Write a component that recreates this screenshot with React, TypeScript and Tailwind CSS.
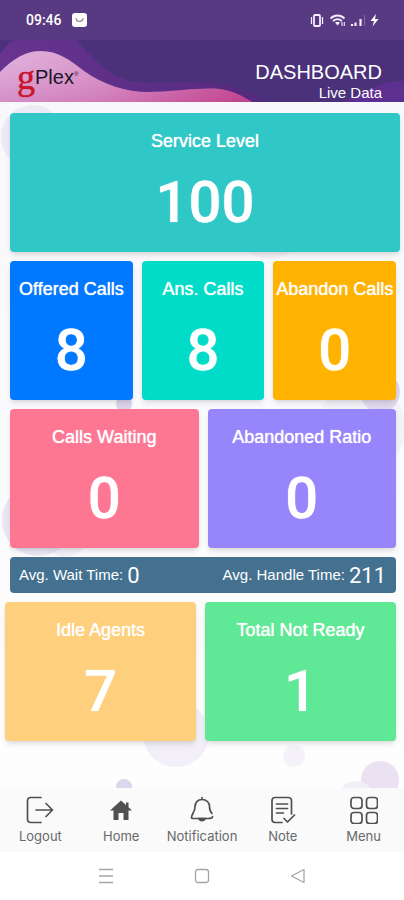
import type { ReactNode } from "react";

type Stat = { label: string; value: number; color: string };

const calls: Stat[] = [
  { label: "Offered Calls", value: 8, color: "bg-[#0078ff]" },
  { label: "Ans. Calls", value: 8, color: "bg-[#00dcc8]" },
  { label: "Abandon Calls", value: 0, color: "bg-[#ffb200]" },
];

const queue: Stat[] = [
  { label: "Calls Waiting", value: 0, color: "bg-[#fd7793]" },
  { label: "Abandoned Ratio", value: 0, color: "bg-[#9685fb]" },
];

const agents: Stat[] = [
  { label: "Idle Agents", value: 7, color: "bg-[#fecf7c]" },
  { label: "Total Not Ready", value: 1, color: "bg-[#5fe896]" },
];

function StatCard({ label, value, color }: Stat) {
  return (
    <section className={`${color} flex h-[139px] min-w-0 flex-1 flex-col items-center rounded-sm pt-4 text-white shadow-md`}>
      <h2 className="whitespace-nowrap text-[18px] leading-6 [text-shadow:0_0_1px_#fff]">{label}</h2>
      <p className="mt-4 font-[Roboto,sans-serif] text-[58px] font-medium leading-[66px] [text-shadow:0_0_1px_#fff]">{value}</p>
    </section>
  );
}

function StatusBar() {
  return (
    <div className="flex h-10 items-center justify-between bg-[#573a82] pl-[26px] pr-6 text-white">
      <div className="flex items-center gap-[10px]">
        <span className="font-[Roboto,sans-serif] text-[14px] font-medium">09:46</span>
        <svg className="h-[14px] w-[15px]" viewBox="0 0 15 14" fill="none">
          <rect width="15" height="14" rx="3" fill="#fff" />
          <path d="M4 5.5c.6 4 6.4 4 7 0" stroke="#888" strokeWidth="1.2" strokeLinecap="round" />
        </svg>
      </div>
      <svg className="h-4 w-[70px]" viewBox="0 0 70 16" fill="none" stroke="#f4ecff">
        <rect x="4" y="3" width="6" height="11" rx="1" strokeWidth="1.8" />
        <path d="M1.500 5v7M12.500 5v7" strokeWidth="1.300" />
        <path d="M20.500 6.500c4-4 10-4 14 0M23 9c3-2.500 6-2.500 9 0" strokeWidth="1.8" />
        <path d="M25 10.500 27.500 13.500l2.500-3c-1.500-1-3.500-1-5 0z" fill="#f4ecff" stroke="none" />
        <path d="M32 10v4M34.300 14v-4" strokeWidth="1.1" />
        <path d="M42 14v-2M45.500 14v-3.500M50.500 14V7" strokeWidth="2.200" />
        <path d="M54.500 14V3" strokeWidth="1.200" opacity=".25" />
        <path d="M66 2l-5.500 7H64l-1.500 5.500 6-7.500H65z" fill="#fff" stroke="none" />
      </svg>
    </div>
  );
}

function Header() {
  return (
    <header className="relative h-[62px] overflow-hidden bg-[#4a3179] text-white">
      <svg className="absolute inset-0 h-full w-full" viewBox="0 0 404 62" preserveAspectRatio="none" aria-hidden="true">
        <defs>
          <linearGradient id="pink" x1="0" x2="1" y1="0" y2="0">
            <stop offset="0" stopColor="#dba6d8" />
            <stop offset=".4" stopColor="#d68cc6" />
            <stop offset="1" stopColor="#c03d8b" />
          </linearGradient>
          <linearGradient id="shade" x1="0" x2="0" y1="0" y2="1">
            <stop offset="0" stopColor="#fff" stopOpacity=".12" />
            <stop offset="1" stopColor="#c0458f" stopOpacity=".25" />
          </linearGradient>
          <linearGradient id="violet" x1="0" x2="1" y1="0" y2="0">
            <stop offset="0" stopColor="#673490" />
            <stop offset="1" stopColor="#55297e" />
          </linearGradient>
        </defs>
        <path d="M0 14C6 6 10 0 18 0H76C88 12 104 36 134 42C168 45 205 38 226 46C246 50 258 56 268 62H0z" fill="url(#violet)" />
        <path d="M0 32C14 18 26 11 41 11C58 11 70 20 84 31C104 45 126 52 148 52C174 52 200 47 220 49C235 51 244 57 252 62H0z" fill="url(#pink)" />
        <path d="M0 32C14 18 26 11 41 11C58 11 70 20 84 31C104 45 126 52 148 52C174 52 200 47 220 49C235 51 244 57 252 62H0z" fill="url(#shade)" />
        <path d="M340 62C360 58 376 40 404 41V62z" fill="#6b2fa0" opacity=".6" />
      </svg>
      <div className="relative flex h-full items-end justify-between pl-[17px] pr-[22px]">
        <a href="#home" className="flex h-full items-center pt-3 text-[20px] leading-6 text-[#1c1426]">
          <span className="font-['Liberation_Serif',serif] text-[36px] text-[#c9142c] [text-shadow:0_0_1px_#c9142c]">g</span>
          <span>Plex</span>
          <sup className="text-[6px]">®</sup>
        </a>
        <div className="text-right">
          <h1 className="text-[20px] leading-6">DASHBOARD</h1>
          <p className="text-[15px] leading-[18px]">Live Data</p>
        </div>
      </div>
    </header>
  );
}

function Bubbles() {
  return (
    <svg className="absolute inset-0 h-full w-full" viewBox="0 0 404 686" preserveAspectRatio="none" aria-hidden="true">
      <g fill="#e6e0f1">
        <circle cx="33" cy="35" r="32" opacity=".6" />
        <circle cx="270" cy="121" r="36" fill="#f0e8f5" opacity=".6" />
        <circle cx="124" cy="302" r="8" fill="#ddd4ec" />
        <circle cx="380" cy="290" r="20" fill="#e0d7ee" />
        <circle cx="362" cy="325" r="44" opacity=".3" />
        <circle cx="38" cy="418" r="36" opacity=".8" />
        <circle cx="65" cy="430" r="25" opacity=".4" />
        <circle cx="176" cy="632" r="33" fill="#f3eff8" />
        <circle cx="294" cy="654" r="11" fill="#f6f2fa" />
        <circle cx="124" cy="685" r="8" fill="#ddd6ed" />
        <circle cx="380" cy="678" r="19" fill="#eae1f2" />
        <circle cx="356" cy="697" r="18" fill="#f3eff8" />
      </g>
    </svg>
  );
}

const tabs: { label: string; icon: ReactNode }[] = [
  { label: "Logout", icon: <path d="M15 1.500H5Q1.500 1.500 1.500 5V23Q1.500 26.500 5 26.500H15M10 14H26M20 7.500L26.500 14L20 20.500" /> },
  {
    label: "Home",
    icon: <path d="M14 4.500L3 14.500H6.500V24H11.500V17H16.500V24H21.500V14.500H25L21.500 11.300V6.500H19V9z" fill="#505052" stroke="none" />,
  },
  {
    label: "Notification",
    icon: (
      <>
        <path d="M24 17.500C22 15.500 21.500 14 21.500 10.500C21.500 6.500 18.500 3.500 14 3.500C9.500 3.500 7 6.500 7 11C7 16 3.500 18 3.500 21.500C3.500 22.500 4.500 22.500 5 22.500H20C23 22.500 24.500 22 24.500 20.500M14 1.500V3.500" />
        <path d="M10.500 22.500Q14 27 17.500 22.500z" fill="#505052" />
      </>
    ),
  },
  {
    label: "Note",
    icon: (
      <>
        <path d="M13 26.500H6Q3 26.500 3 23.500V4.500Q3 1.500 6 1.500H19Q22.500 1.500 22.500 4.500V18" />
        <path d="M7.500 8H18.500M7.500 12.500H18.500M7.500 17H14.500M15 22.500L18.500 26L25.500 19" />
      </>
    ),
  },
  {
    label: "Menu",
    icon: (
      <>
        <rect x="1" y="1.500" width="11" height="11" rx="3" />
        <rect x="16.500" y="1.500" width="11" height="11" rx="3" />
        <rect x="1" y="16.500" width="11" height="11" rx="3" />
        <rect x="16.500" y="16.500" width="11" height="11" rx="3" />
      </>
    ),
  },
];

export default function App() {
  return (
    <div className="flex min-h-screen flex-col bg-white font-['Liberation_Sans',Arial,sans-serif]">
      <StatusBar />
      <Header />

      <main className="relative flex-1 bg-linear-to-b from-[#f8f7fb] to-[#fefefe] pb-4 pt-[11px]">
        <Bubbles />
        <div className="relative flex flex-col gap-[9px]">
          <div className="flex pl-[10px] pr-1">
            <StatCard label="Service Level" value={100} color="bg-[#30c7c7]" />
          </div>
          <div className="flex gap-[9px] pl-[10px] pr-2">
            {calls.map((s) => <StatCard key={s.label} {...s} />)}
          </div>
          <div className="flex gap-[9px] pl-[10px] pr-2">
            {queue.map((s) => <StatCard key={s.label} {...s} />)}
          </div>
          <dl className="ml-[10px] mr-2 flex h-9 items-center justify-between rounded-sm bg-[#44718f] pl-[9px] pr-[10px] text-[15px] text-white">
            <div className="flex items-center gap-1">
              <dt>Avg. Wait Time:</dt>
              <dd className="font-[Roboto,sans-serif] text-[22px]">0</dd>
            </div>
            <div className="flex items-center gap-1">
              <dt>Avg. Handle Time:</dt>
              <dd className="font-[Roboto,sans-serif] text-[22px]">211</dd>
            </div>
          </dl>
          <div className="flex gap-[9px] pl-[5px] pr-2">
            {agents.map((s) => <StatCard key={s.label} {...s} />)}
          </div>
        </div>
      </main>

      <nav className="grid h-16 grid-cols-5 bg-[#fafafa]">
        {tabs.map((t) => (
          <a key={t.label} href={`#${t.label.toLowerCase()}`} className="flex flex-col items-center gap-1 pt-2 text-[#68686a]">
            <svg className="h-7 w-7" viewBox="0 0 28 28" fill="none" stroke="#505052" strokeWidth="1.700" strokeLinecap="round" strokeLinejoin="round">{t.icon}</svg>
            <span className="font-[Inter,sans-serif] text-[13px] leading-4">{t.label}</span>
          </a>
        ))}
      </nav>

      <div className="flex h-12 items-center justify-center gap-20 text-[#a5a5a5]">
        <button aria-label="Recent apps">
          <svg className="h-4 w-4" viewBox="0 0 16 16" fill="none" stroke="currentColor" strokeWidth="1.300"><path d="M1 1.500h14M1 8h14M1 14.500h14" /></svg>
        </button>
        <button aria-label="Home screen">
          <svg className="h-4 w-4" viewBox="0 0 16 16" fill="none" stroke="currentColor" strokeWidth="1.300"><rect x="1.500" y="1.500" width="13" height="13" rx="2.500" /></svg>
        </button>
        <button aria-label="Back">
          <svg className="h-4 w-4" viewBox="0 0 16 16" fill="none" stroke="currentColor" strokeWidth="1.300" strokeLinejoin="round"><path d="M14 1.500v13L1.500 8z" /></svg>
        </button>
      </div>
    </div>
  );
}
